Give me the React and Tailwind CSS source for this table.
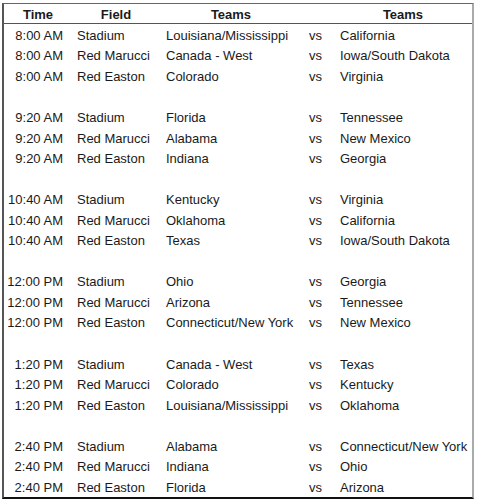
const blocks = [
  {
    time: "8:00 AM",
    games: [
      ["Stadium", "Louisiana/Mississippi", "California"],
      ["Red Marucci", "Canada - West", "Iowa/South Dakota"],
      ["Red Easton", "Colorado", "Virginia"],
    ],
  },
  {
    time: "9:20 AM",
    games: [
      ["Stadium", "Florida", "Tennessee"],
      ["Red Marucci", "Alabama", "New Mexico"],
      ["Red Easton", "Indiana", "Georgia"],
    ],
  },
  {
    time: "10:40 AM",
    games: [
      ["Stadium", "Kentucky", "Virginia"],
      ["Red Marucci", "Oklahoma", "California"],
      ["Red Easton", "Texas", "Iowa/South Dakota"],
    ],
  },
  {
    time: "12:00 PM",
    games: [
      ["Stadium", "Ohio", "Georgia"],
      ["Red Marucci", "Arizona", "Tennessee"],
      ["Red Easton", "Connecticut/New York", "New Mexico"],
    ],
  },
  {
    time: "1:20 PM",
    games: [
      ["Stadium", "Canada - West", "Texas"],
      ["Red Marucci", "Colorado", "Kentucky"],
      ["Red Easton", "Louisiana/Mississippi", "Oklahoma"],
    ],
  },
  {
    time: "2:40 PM",
    games: [
      ["Stadium", "Alabama", "Connecticut/New York"],
      ["Red Marucci", "Indiana", "Ohio"],
      ["Red Easton", "Florida", "Arizona"],
    ],
  },
];

const cols =
  "grid grid-cols-[68px_88px_142px_32px_1fr] h-[20.55px] pt-[2px] items-center";

function Row({ time, field, home, away }) {
  return (
    <div className={cols}>
      <div className="text-right pr-[9px] whitespace-nowrap">{time}</div>
      <div className="pl-[5px] whitespace-nowrap">{field}</div>
      <div className="pl-[6px] whitespace-nowrap">{home}</div>
      <div className="pl-[7px]">vs</div>
      <div className="pl-[6px] whitespace-nowrap">{away}</div>
    </div>
  );
}

export default function App() {
  return (
    <div className="w-[477px] h-[502px] bg-white pt-[3px] pl-[2px]">
      <div
        className="w-[472px] border-t border-t-[#666] border-l-2 border-l-[#555] border-r-2 border-r-[#aaa] border-b-2 border-b-[#111] text-[13px] text-[#1a1a1a] leading-none"
        style={{ fontFamily: '"Liberation Sans", Arial, sans-serif' }}
      >
        {/* Header */}
        <div className="grid grid-cols-[68px_88px_142px_32px_1fr] h-[20px] pt-[2px] items-center border-b border-b-[#555] font-bold">
          <div className="text-center">Time</div>
          <div className="text-center">Field</div>
          <div className="text-center">Teams</div>
          <div />
          <div className="text-center">Teams</div>
        </div>

        {blocks.map((b, i) => (
          <div key={b.time}>
            {b.games.map((g) => (
              <Row key={g[0]} time={b.time} field={g[0]} home={g[1]} away={g[2]} />
            ))}
            {i < blocks.length - 1 && <div className="h-[20.55px]" />}
          </div>
        ))}
      </div>
    </div>
  );
}
